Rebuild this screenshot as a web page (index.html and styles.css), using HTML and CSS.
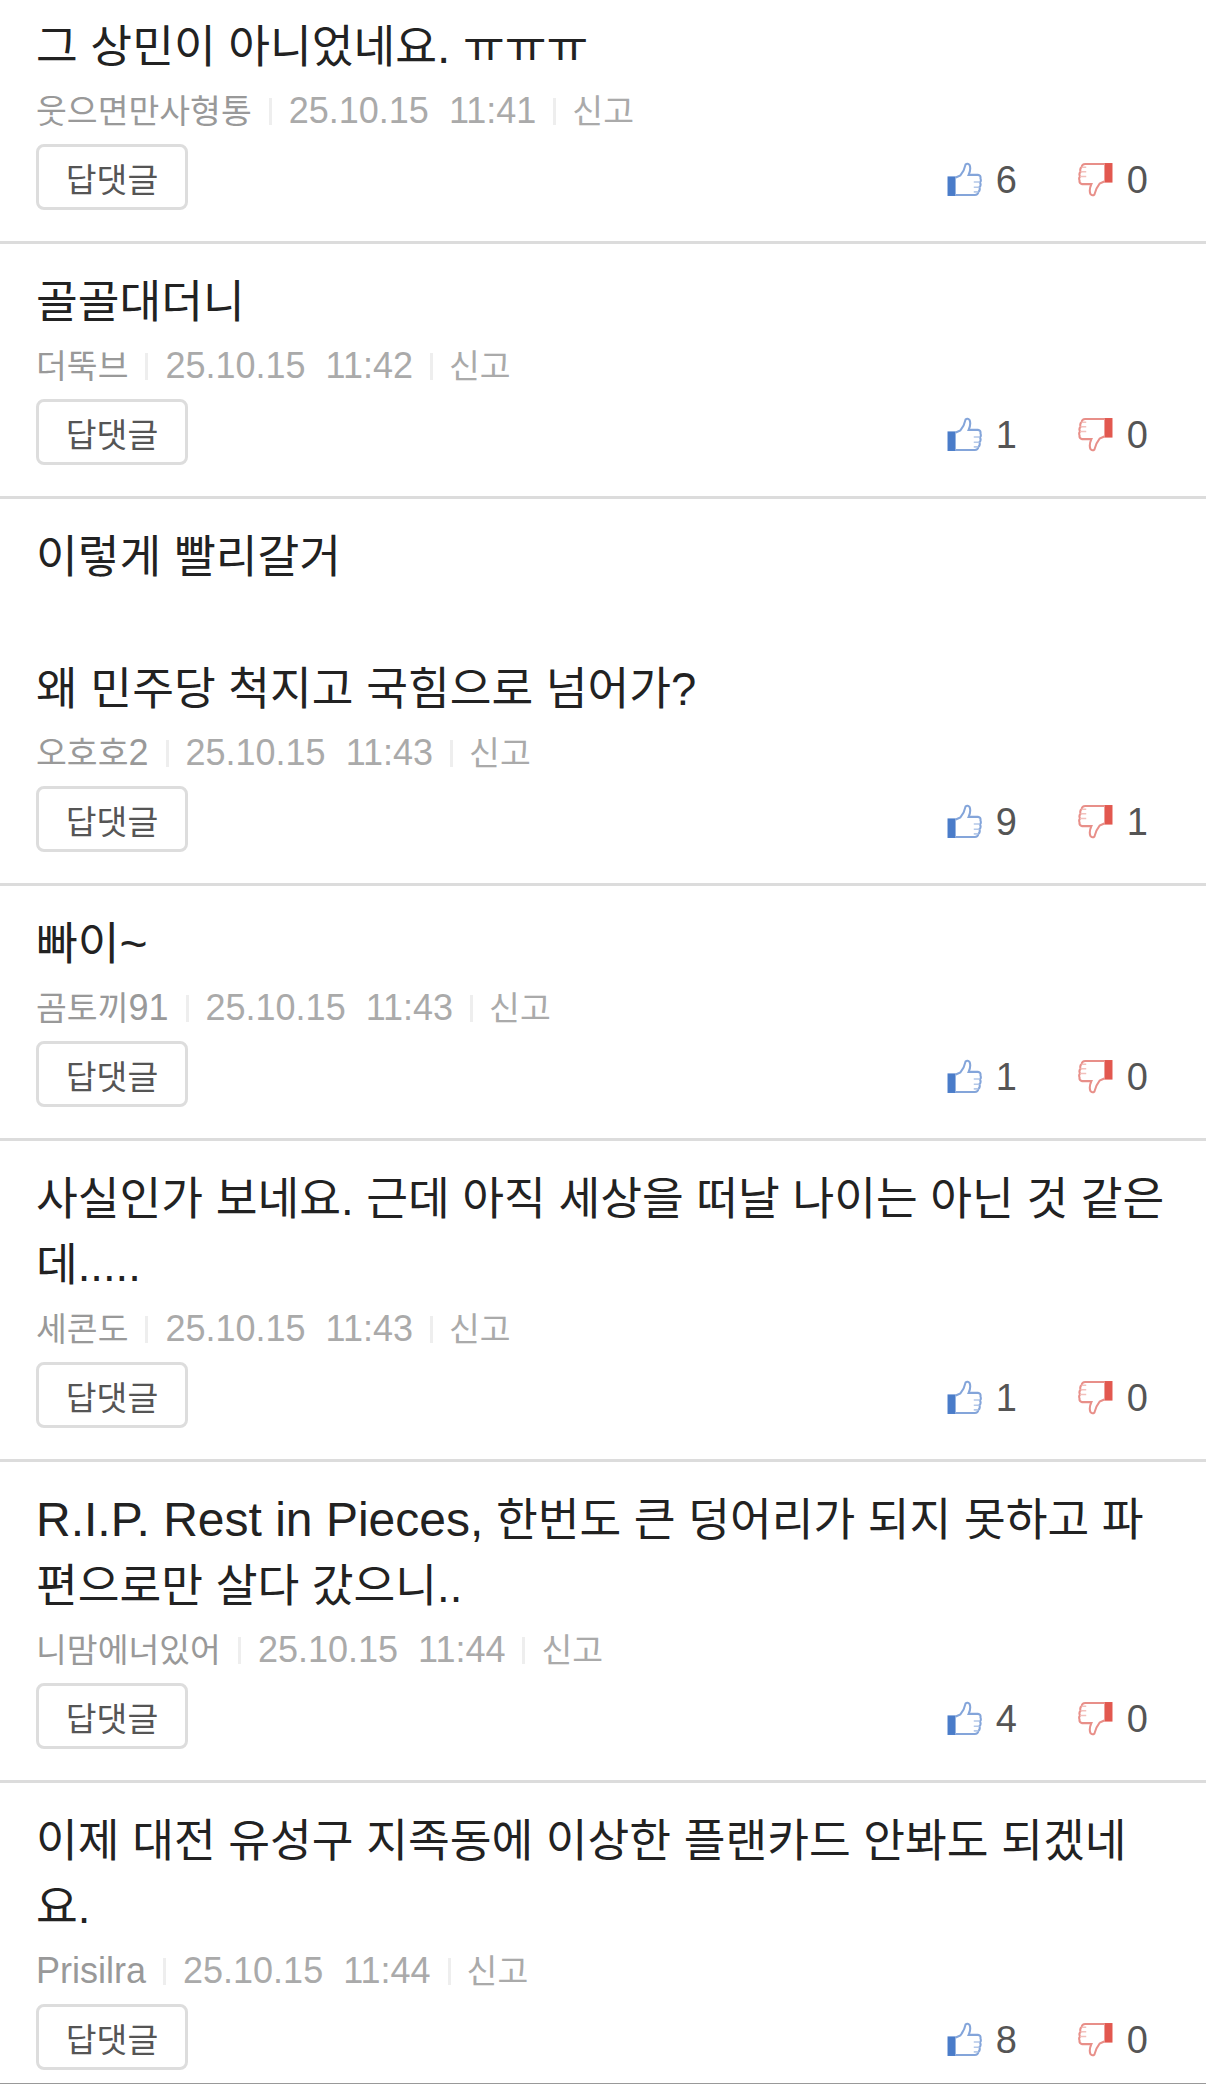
FILE: index.html
```html
<!DOCTYPE html>
<html lang="ko">
<head>
  <meta charset="UTF-8">
  <title>댓글</title>
  <link rel="stylesheet" href="styles.css">
</head>
<body>
  <svg class="icon-defs" width="0" height="0">
    <symbol id="thumb-up" viewBox="0 0 34 34">
      <rect x="0.5" y="14" width="8" height="19" fill="#4a7cc9"/>
      <path d="M8.5 15 L13 13 Q17 8 18 2.5 Q20 0.5 22 3 Q23.5 7 21 12.5 L30 12.5 Q33 13 32.5 16 Q33.5 18.5 32 20 Q33.5 22.5 31.5 24.5 Q32.5 27.5 30.5 29 Q30 32 27 32 L8.5 32" fill="#fff" stroke="#84a5da" stroke-width="2"/>
      <path d="M26 19.5 L32 19.5 M26 24.5 L31.5 24.5 M26 29 L30.5 29" fill="none" stroke="#b4c8e8" stroke-width="1.5"/>
    </symbol>
    <symbol id="thumb-down" viewBox="0 0 34 34">
      <rect x="25.5" y="1" width="8" height="19" fill="#e2584f"/>
      <path d="M25.5 19 L21 21 Q17 26 16 31.5 Q14 33.5 12 31 Q10.5 27 13 21.5 L4 21.5 Q1 21 1.5 18 Q0.5 15.5 2 14 Q0.5 11.5 2.5 9.5 Q1.5 6.5 3.5 5 Q4 2 7 2 L25.5 2" fill="#fff" stroke="#e88f89" stroke-width="2"/>
      <path d="M2 14 L8 14 M2.5 9.5 L8 9.5 M3.5 5 L8 5" fill="none" stroke="#f2c0bc" stroke-width="1.5"/>
    </symbol>
  </svg>

  <ul class="comment-list">
    <li class="comment">
      <p class="comment-text">그 상민이 아니었네요<span class="en">.</span> ㅠㅠㅠ</p>
      <div class="meta"><span class="nick">웃으면만사형통</span><span class="date">25.10.15&nbsp; 11:41</span><a class="report">신고</a></div>
      <div class="actions">
        <button class="btn-reply">답댓글</button>
        <div class="votes">
          <span class="vote vote-up"><svg class="thumb"><use href="#thumb-up"/></svg>6</span>
          <span class="vote vote-down"><svg class="thumb"><use href="#thumb-down"/></svg>0</span>
        </div>
      </div>
    </li>
    <li class="comment">
      <p class="comment-text">골골대더니</p>
      <div class="meta"><span class="nick">더뚝브</span><span class="date">25.10.15&nbsp; 11:42</span><a class="report">신고</a></div>
      <div class="actions">
        <button class="btn-reply">답댓글</button>
        <div class="votes">
          <span class="vote vote-up"><svg class="thumb"><use href="#thumb-up"/></svg>1</span>
          <span class="vote vote-down"><svg class="thumb"><use href="#thumb-down"/></svg>0</span>
        </div>
      </div>
    </li>
    <li class="comment">
      <p class="comment-text">이렇게 빨리갈거<br><br>왜 민주당 척지고 국힘으로 넘어가?</p>
      <div class="meta"><span class="nick">오호호<span class="en">2</span></span><span class="date">25.10.15&nbsp; 11:43</span><a class="report">신고</a></div>
      <div class="actions">
        <button class="btn-reply">답댓글</button>
        <div class="votes">
          <span class="vote vote-up"><svg class="thumb"><use href="#thumb-up"/></svg>9</span>
          <span class="vote vote-down"><svg class="thumb"><use href="#thumb-down"/></svg>1</span>
        </div>
      </div>
    </li>
    <li class="comment">
      <p class="comment-text">빠이<span class="en">~</span></p>
      <div class="meta"><span class="nick">곰토끼<span class="en">91</span></span><span class="date">25.10.15&nbsp; 11:43</span><a class="report">신고</a></div>
      <div class="actions">
        <button class="btn-reply">답댓글</button>
        <div class="votes">
          <span class="vote vote-up"><svg class="thumb"><use href="#thumb-up"/></svg>1</span>
          <span class="vote vote-down"><svg class="thumb"><use href="#thumb-down"/></svg>0</span>
        </div>
      </div>
    </li>
    <li class="comment">
      <p class="comment-text">사실인가 보네요. 근데 아직 세상을 떠날 나이는 아닌 것 같은데.....</p>
      <div class="meta"><span class="nick">세콘도</span><span class="date">25.10.15&nbsp; 11:43</span><a class="report">신고</a></div>
      <div class="actions">
        <button class="btn-reply">답댓글</button>
        <div class="votes">
          <span class="vote vote-up"><svg class="thumb"><use href="#thumb-up"/></svg>1</span>
          <span class="vote vote-down"><svg class="thumb"><use href="#thumb-down"/></svg>0</span>
        </div>
      </div>
    </li>
    <li class="comment">
      <p class="comment-text"><span class="en">R.I.P. Rest in Pieces,</span> 한번도 큰 덩어리가 되지 못하고 파편으로만 살다 갔으니..</p>
      <div class="meta"><span class="nick">니맘에너있어</span><span class="date">25.10.15&nbsp; 11:44</span><a class="report">신고</a></div>
      <div class="actions">
        <button class="btn-reply">답댓글</button>
        <div class="votes">
          <span class="vote vote-up"><svg class="thumb"><use href="#thumb-up"/></svg>4</span>
          <span class="vote vote-down"><svg class="thumb"><use href="#thumb-down"/></svg>0</span>
        </div>
      </div>
    </li>
    <li class="comment">
      <p class="comment-text">이제 대전 유성구 지족동에 이상한 플랜카드 안봐도 되겠네요.</p>
      <div class="meta"><span class="nick"><span class="en">Prisilra</span></span><span class="date">25.10.15&nbsp; 11:44</span><a class="report">신고</a></div>
      <div class="actions">
        <button class="btn-reply">답댓글</button>
        <div class="votes">
          <span class="vote vote-up"><svg class="thumb"><use href="#thumb-up"/></svg>8</span>
          <span class="vote vote-down"><svg class="thumb"><use href="#thumb-down"/></svg>0</span>
        </div>
      </div>
    </li>
  </ul>
</body>
</html>
```

FILE: styles.css
```css
html {
  height: 100%;
}

body {
  box-sizing: border-box;
  height: 2084px;
  margin: 0;
  overflow: hidden;
  background-color: #fff;
  border-bottom: 1px solid #999;
  font-family: "Liberation Sans", "Noto Sans CJK KR", sans-serif;
}

.icon-defs {
  position: absolute;
}

.comment-list {
  list-style-type: none;
  margin: -11px 0 0;
  padding: 0;
}

.comment {
  padding: 26px 36px 31px;
  border-bottom: 3px solid #dcdcdc;
}

.comment:last-child {
  border-bottom: 0;
}

.comment-text {
  margin: 0;
  font-size: 45.4px;
  line-height: 66px;
  color: #222;
}

.comment-text .en {
  font-size: 48px;
  line-height: 0;
}

.meta {
  display: flex;
  align-items: baseline;
  height: 58px;
  line-height: 60px;
  font-size: 33.5px;
  color: #aaa;
}

.nick {
  color: #999;
}

.nick .en {
  font-size: 36px;
  line-height: 0;
}

.date {
  font-size: 36px;
  margin-right: 16px;
}

.nick::after,
.date::after {
  content: "";
  display: inline-block;
  width: 3px;
  height: 27px;
  margin: 0 17px;
  background-color: #eee;
  vertical-align: -2px;
}

.date::after {
  margin-right: 0;
}

.actions {
  display: flex;
  justify-content: space-between;
  align-items: center;
  margin-top: 5px;
}

.btn-reply {
  width: 152px;
  height: 66px;
  padding: 0;
  background-color: #fff;
  border: 3px solid #ddd;
  border-radius: 8px;
  font-family: inherit;
  font-size: 33.5px;
  color: #555;
}

.votes {
  display: flex;
  margin-right: 22px;
  padding-top: 5px;
}

.vote {
  display: flex;
  align-items: center;
  gap: 14px;
  font-size: 38px;
  line-height: 44px;
  color: #555;
}

.vote-up {
  width: 131px;
}

.thumb {
  width: 35px;
  height: 35px;
}
```
